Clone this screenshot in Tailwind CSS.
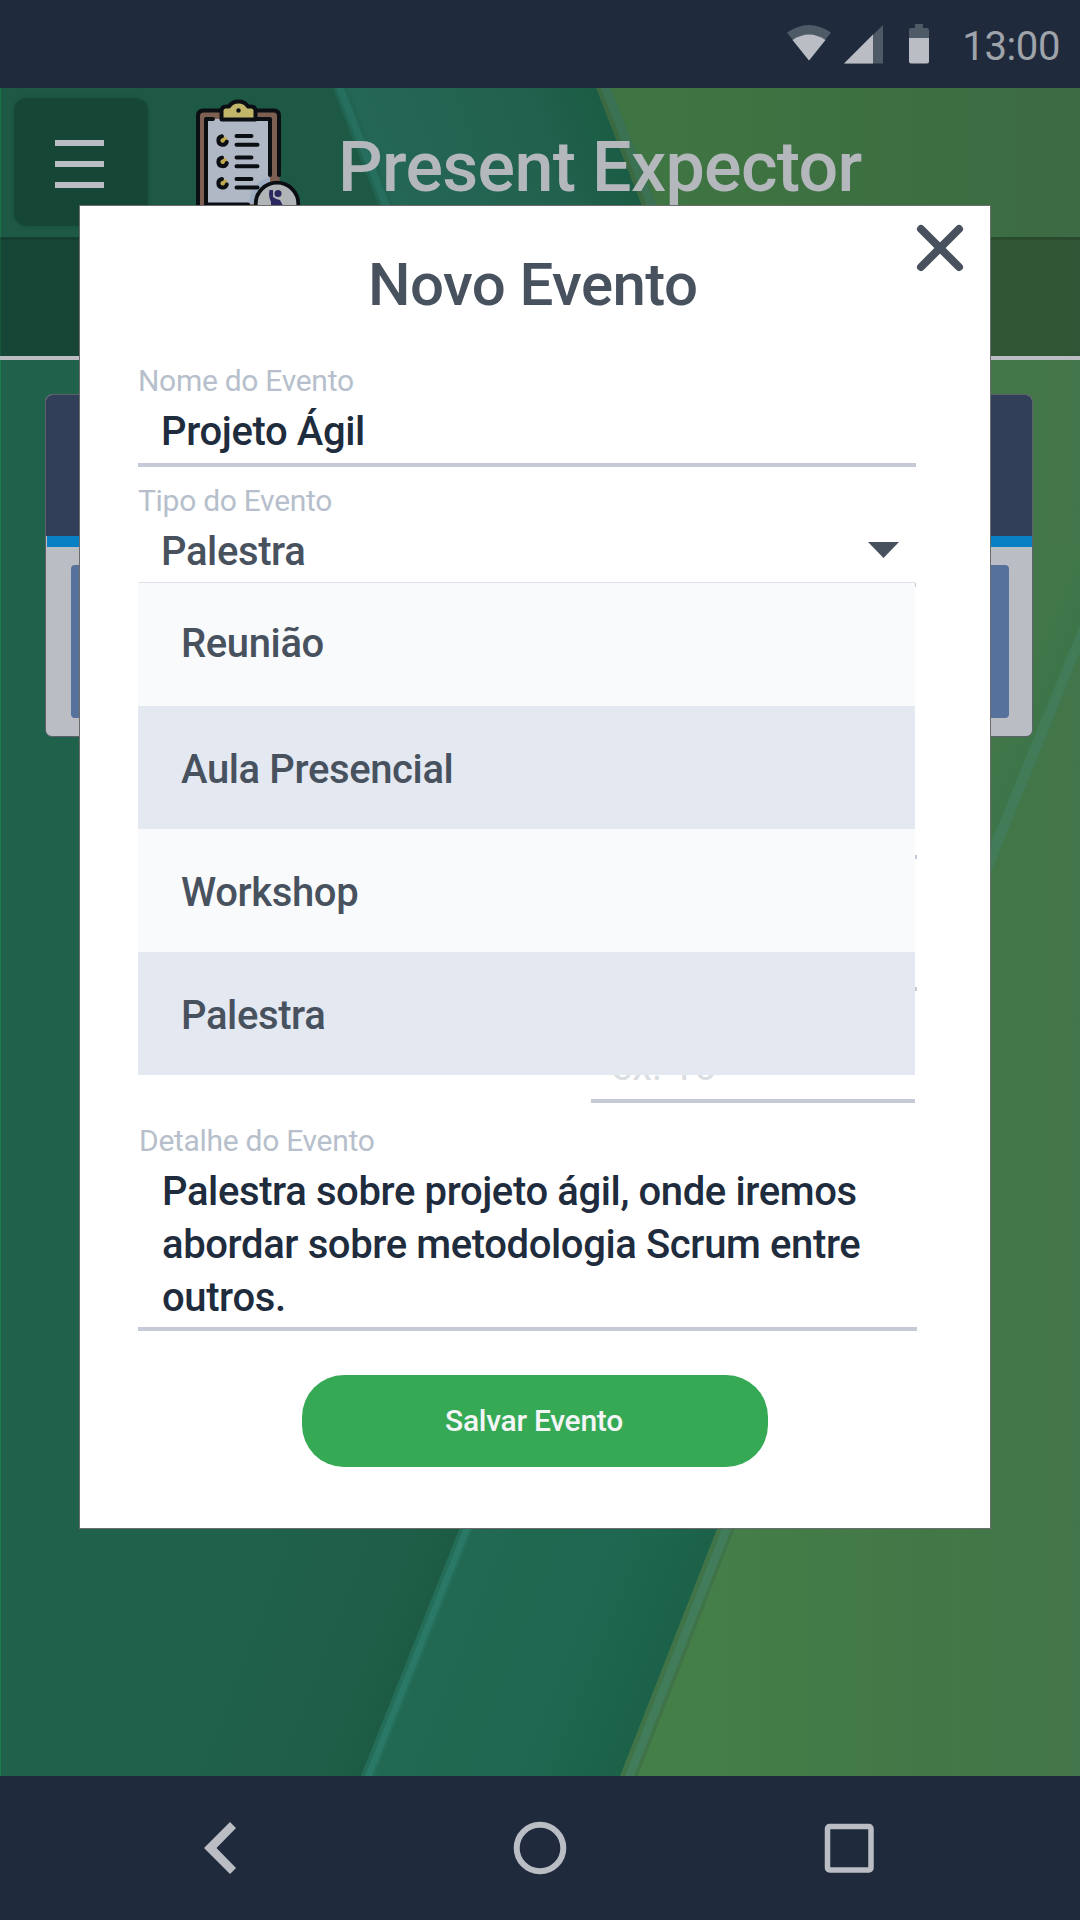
<!DOCTYPE html>
<html lang="pt-BR">
<head>
<meta charset="utf-8">
<title>Present Expector</title>
<script src="https://cdn.jsdelivr.net/npm/@tailwindcss/browser@4"></script>
</head>
<body class="font-['Roboto',sans-serif]">
<div class="relative flex h-[1920px] w-[1080px] flex-col overflow-hidden bg-[#1f2b3d]">

  <!-- Status bar -->
  <div class="flex h-[88px] shrink-0 items-center justify-end bg-[#1f2b3d] pr-[20px]">
    <svg class="mr-[31px] h-[44px] w-[146px]" viewBox="785 22 146 44">
      <path d="M787 32.500Q809 17.500 831 32.500L809 60.500Z" fill="#4e5b67"/>
      <path d="M792.500 40Q809 29 825.500 40L809 60.500Z" fill="#babdc3"/>
      <path d="M844 63.500L883 25V63.500Z" fill="#4e5b67"/>
      <path d="M844 63.500L873 34.500V63.500Z" fill="#babdc3"/>
      <path d="M915 24h8v4h4q2 0 2 2v9h-20v-9q0-2 2-2h4Z" fill="#4e5b67"/>
      <path d="M909 38h20v23.500q0 2-2 2h-16q-2 0-2-2Z" fill="#babdc3"/>
    </svg>
    <span class="mt-[5px] text-[40px] leading-[48px] tracking-[-0.38px] text-[#9fa3aa]">13:00</span>
  </div>

  <main class="relative h-[1688px] shrink-0 overflow-hidden">
    <!-- Wallpaper -->
    <svg class="absolute inset-0 h-[1688px] w-[1080px]" viewBox="0 88 1080 1688">
      <defs>
        <linearGradient id="left" gradientUnits="userSpaceOnUse" x1="240" y1="1600" x2="420" y2="1670"><stop offset="0" stop-color="#20614b"/><stop offset=".65" stop-color="#1f5f49"/><stop offset="1" stop-color="#1c5a41"/></linearGradient>
        <linearGradient id="teal" gradientUnits="userSpaceOnUse" x1="420" y1="1640" x2="660" y2="1735"><stop offset="0" stop-color="#226852"/><stop offset=".6" stop-color="#1f6750"/><stop offset="1" stop-color="#1b6047"/></linearGradient>
        <linearGradient id="tealTop" gradientUnits="userSpaceOnUse" x1="370" y1="180" x2="610" y2="88"><stop offset="0" stop-color="#29705e"/><stop offset=".7" stop-color="#246a54"/><stop offset="1" stop-color="#1d634a"/></linearGradient>
        <linearGradient id="green" gradientUnits="userSpaceOnUse" x1="680" y1="0" x2="1080" y2="0"><stop offset="0" stop-color="#457f48"/><stop offset=".6" stop-color="#427847"/><stop offset="1" stop-color="#43754a"/></linearGradient>
        <linearGradient id="shade" gradientUnits="userSpaceOnUse" x1="985" y1="720" x2="1048" y2="746"><stop offset="0" stop-color="#437749"/><stop offset="1" stop-color="#3b7549"/></linearGradient>
      </defs>
      <rect y="88" width="1080" height="1688" fill="url(#left)"/>
      <path d="M333 88L680 975L361 1776H1080V88Z" fill="url(#teal)"/>
      <path d="M333 88L449 385H800L611 88Z" fill="url(#tealTop)"/>
      <path d="M333 88L680 975L361 1776H375L694 975L348 88Z" fill="#246d59"/>
      <path d="M336 88L684 975L365 1776H372L691 975L344 88Z" fill="#2a7866"/>
      <path d="M596 88L938 966L620 1776H1080V88Z" fill="#407448"/>
      <path d="M601 88L943 966L625 1776H634L953 966L611 88Z" fill="#417c5b"/>
      <path d="M611 88L955 966L638 1776H1080V88Z" fill="url(#green)"/>
      <path d="M940 545H1080V625L988 860H940Z" fill="url(#shade)"/>
      <path d="M1080 625V652L988 880V850Z" fill="#417b58"/>
      <rect x="0" y="88" width="1" height="1688" fill="#1e7a50"/>
    </svg>

    <div class="relative flex flex-col">
      <header class="flex h-[152px] items-start border-b-[3px] border-black/30 bg-black/8">
        <button class="mt-[10px] ml-[14px] flex h-[128px] w-[134px] shrink-0 flex-col items-center gap-[14.5px] rounded-[13px] bg-black/21 pt-[41.5px] pr-[3px] shadow-[0_0_4px_rgba(0,0,0,0.12)]" aria-label="Menu">
          <span class="h-[6.5px] w-[49px] bg-[#babdc3]"></span>
          <span class="h-[6.5px] w-[49px] bg-[#babdc3]"></span>
          <span class="h-[6.5px] w-[49px] bg-[#babdc3]"></span>
        </button>
        <svg class="mt-[10px] ml-[46px] h-[130px] w-[110px] shrink-0" viewBox="194 98 110 130" fill="none" stroke-linecap="round">
          <path d="M198 226V116q0-5.500 5.500-5.500H274q5.500 0 5.500 5.500V226Z" fill="#7d6052"/>
          <path d="M206 119H270V204H206Z" fill="#b0b8c5"/>
          <path d="M249 204a28 28 0 0 1 21-27V204Z" fill="#9fadc3"/>
          <g stroke="#0b0f14" stroke-width="4" stroke-linejoin="round">
            <path d="M198 226V116q0-5.500 5.500-5.500H274q5 0 5 5.500V175"/>
            <path d="M213 119H206V220M257 119H270V175M206 204.500H248"/>
            <path d="M221.500 119.500V111q0-4.500 4.500-4.500h3q3-5 9.500-5t9.500 5h3q4.500 0 4.500 4.500v8.500Z" fill="#c0b568"/>
            <path d="M236.500 136H251.500M236.500 144.700H257.500M236.500 157.500H251.500M236.500 166.200H257.500M236.500 179H251.500M236.500 187.500H257.500"/>
          </g>
          <circle cx="238.500" cy="110.500" r="2.200" fill="#0b0f14"/>
          <g fill="#c0a94e">
            <circle cx="223.500" cy="140.500" r="4"/><circle cx="223.500" cy="161.900" r="4"/><circle cx="223.500" cy="183.300" r="4"/>
          </g>
          <g stroke="#0b0f14" stroke-width="4">
            <path d="M222 136.200a4.300 4.300 0 1 0 4.800 5.500M222 157.600a4.300 4.300 0 1 0 4.800 5.500M222 179a4.300 4.300 0 1 0 4.800 5.500"/>
          </g>
          <circle cx="277" cy="204" r="21.300" fill="#b2b5b8" stroke="#0b0f14" stroke-width="3.800"/>
          <circle cx="278" cy="193.500" r="3.500" fill="#2b2860"/>
          <path d="M269.500 190h3.500v7q4 3 7 3l3 6v8h-12v-12q-2-4-2-8Z" fill="#2b2860"/>
        </svg>
        <h1 class="mt-[37px] ml-[34px] text-[70px] leading-[84px] font-medium tracking-[-0.68px] whitespace-nowrap text-[#b4b7bc]">Present Expector</h1>
      </header>
      <div class="h-[120px] border-b-[4px] border-[#bbbdc2] bg-black/27"></div>
      <section class="mt-[34px] ml-[45px] flex h-[343px] w-[988px] flex-col overflow-hidden rounded-[7px] border border-[#5d6068] bg-[#babdc3]">
        <div class="h-[141px] bg-[#313f59]"></div>
        <div class="ml-px h-[11px] bg-[#0a80c4]"></div>
        <div class="mt-[18px] ml-[25px] h-[153px] w-[938px] rounded-[4px] bg-[#56719c]"></div>
      </section>
    </div>
  </main>

  <!-- System navigation -->
  <nav class="flex h-[144px] shrink-0 items-center bg-[#1f2b3d]">
    <svg class="ml-[200px] h-[56px] w-[40px]" viewBox="200 1820 40 56"><path d="M204 1848L230 1822L236 1828L216.500 1848L236 1868L230 1874Z" fill="#babdc3"/></svg>
    <svg class="ml-[272px] h-[56px] w-[56px]" viewBox="512 1820 56 56"><circle cx="540" cy="1848" r="23.300" fill="none" stroke="#babdc3" stroke-width="6"/></svg>
    <svg class="ml-[252px] h-[56px] w-[60px]" viewBox="820 1820 60 56"><rect x="827.500" y="1826.500" width="43.500" height="43.500" rx="2" fill="none" stroke="#babdc3" stroke-width="5.500"/></svg>
  </nav>

  <!-- Modal -->
  <div class="absolute top-[205px] left-[79px] flex h-[1324px] w-[912px] flex-col border border-[#6c6c6c] bg-white pl-[58px]" role="dialog">
    <button class="absolute top-[17px] left-[835px] size-[50px]" aria-label="Fechar">
      <svg class="size-[50px]" viewBox="915 223 50 50" fill="none" stroke="#48525f" stroke-width="8" stroke-linecap="round"><path d="M921 229L959 267M959 229L921 267"/></svg>
    </button>
    <h2 class="mt-[43px] h-[71px] w-[682px] pl-[230px] text-[60px] leading-[72px] font-medium tracking-[-0.58px] whitespace-nowrap text-[#48525f]">Novo Evento</h2>

    <label class="mt-[43px] flex h-[104px] w-[778px] shrink-0 flex-col border-b-[4px] border-[#c5cad6]">
      <span class="h-[36px] text-[30px] leading-[36px] tracking-[-0.29px] text-[#b6bfcb]">Nome do Evento</span>
      <span class="mt-[9px] pl-[23px] text-[40px] leading-[48px] font-medium tracking-[-0.38px] text-[#1e2c3d]">Projeto Ágil</span>
    </label>

    <div class="relative mt-[16px] flex h-[104px] w-[778px] shrink-0 flex-col border-b-[4px] border-[#c5cad6]">
      <span class="h-[36px] text-[30px] leading-[36px] tracking-[-0.29px] text-[#b6bfcb]">Tipo do Evento</span>
      <div class="mt-[9px] flex items-center justify-between pr-[17px] pl-[23px]">
        <span class="text-[40px] leading-[48px] font-medium tracking-[-0.38px] text-[#48525f]">Palestra</span>
        <svg class="mt-[-5px] h-[16px] w-[31px]" viewBox="0 0 31 16"><path d="M0 0H31L15.500 16Z" fill="#48525f"/></svg>
      </div>
      <ul class="absolute top-[99px] left-0 z-10 w-[777px] border-t border-[#dfe3e9] text-[40px] leading-[48px] font-medium tracking-[-0.38px] text-[#48525f]">
        <li class="flex h-[123px] items-center bg-[#f9fafc] pb-[2px] pl-[43px]">Reunião</li>
        <li class="flex h-[123px] items-center bg-[#e4e8f1] pt-[5px] pl-[43px]">Aula Presencial</li>
        <li class="flex h-[123px] items-center bg-[#f9fafc] pt-[5px] pl-[43px]">Workshop</li>
        <li class="flex h-[123px] items-center bg-[#e4e8f1] pt-[5px] pl-[43px]">Palestra</li>
      </ul>
    </div>

    <div class="h-[272px] w-[779px] shrink-0 border-b-[4px] border-[#c5cad6]"></div>
    <div class="h-[132px] w-[779px] shrink-0 border-b-[4px] border-[#c5cad6]"></div>
    <div class="ml-[453px] flex h-[112px] w-[324px] shrink-0 flex-col justify-end border-b-[4px] border-[#c5cad6] pb-[8px] pl-[20px] text-[40px] leading-[48px] text-[#dadee2]">ex: 10</div>

    <label class="mt-[20px] flex h-[208px] w-[779px] shrink-0 flex-col border-b-[4px] border-[#c5cad6]">
      <span class="h-[36px] pl-px text-[30px] leading-[36px] tracking-[-0.29px] text-[#b6bfcb]">Detalhe do Evento</span>
      <span class="mt-[6px] pl-[24px] text-[40px] leading-[53px] font-medium tracking-[-0.38px] text-[#1e2c3d]">Palestra sobre projeto ágil, onde iremos<br>abordar sobre metodologia Scrum entre<br>outros.</span>
    </label>

    <button class="mt-[44px] ml-[164px] h-[92px] w-[466px] shrink-0 rounded-[42px] bg-[#36a955] pr-[2px] text-[30px] leading-[36px] font-medium tracking-[-0.29px] text-[#f4f5f6]">Salvar Evento</button>
  </div>
</div>
</body>
</html>
